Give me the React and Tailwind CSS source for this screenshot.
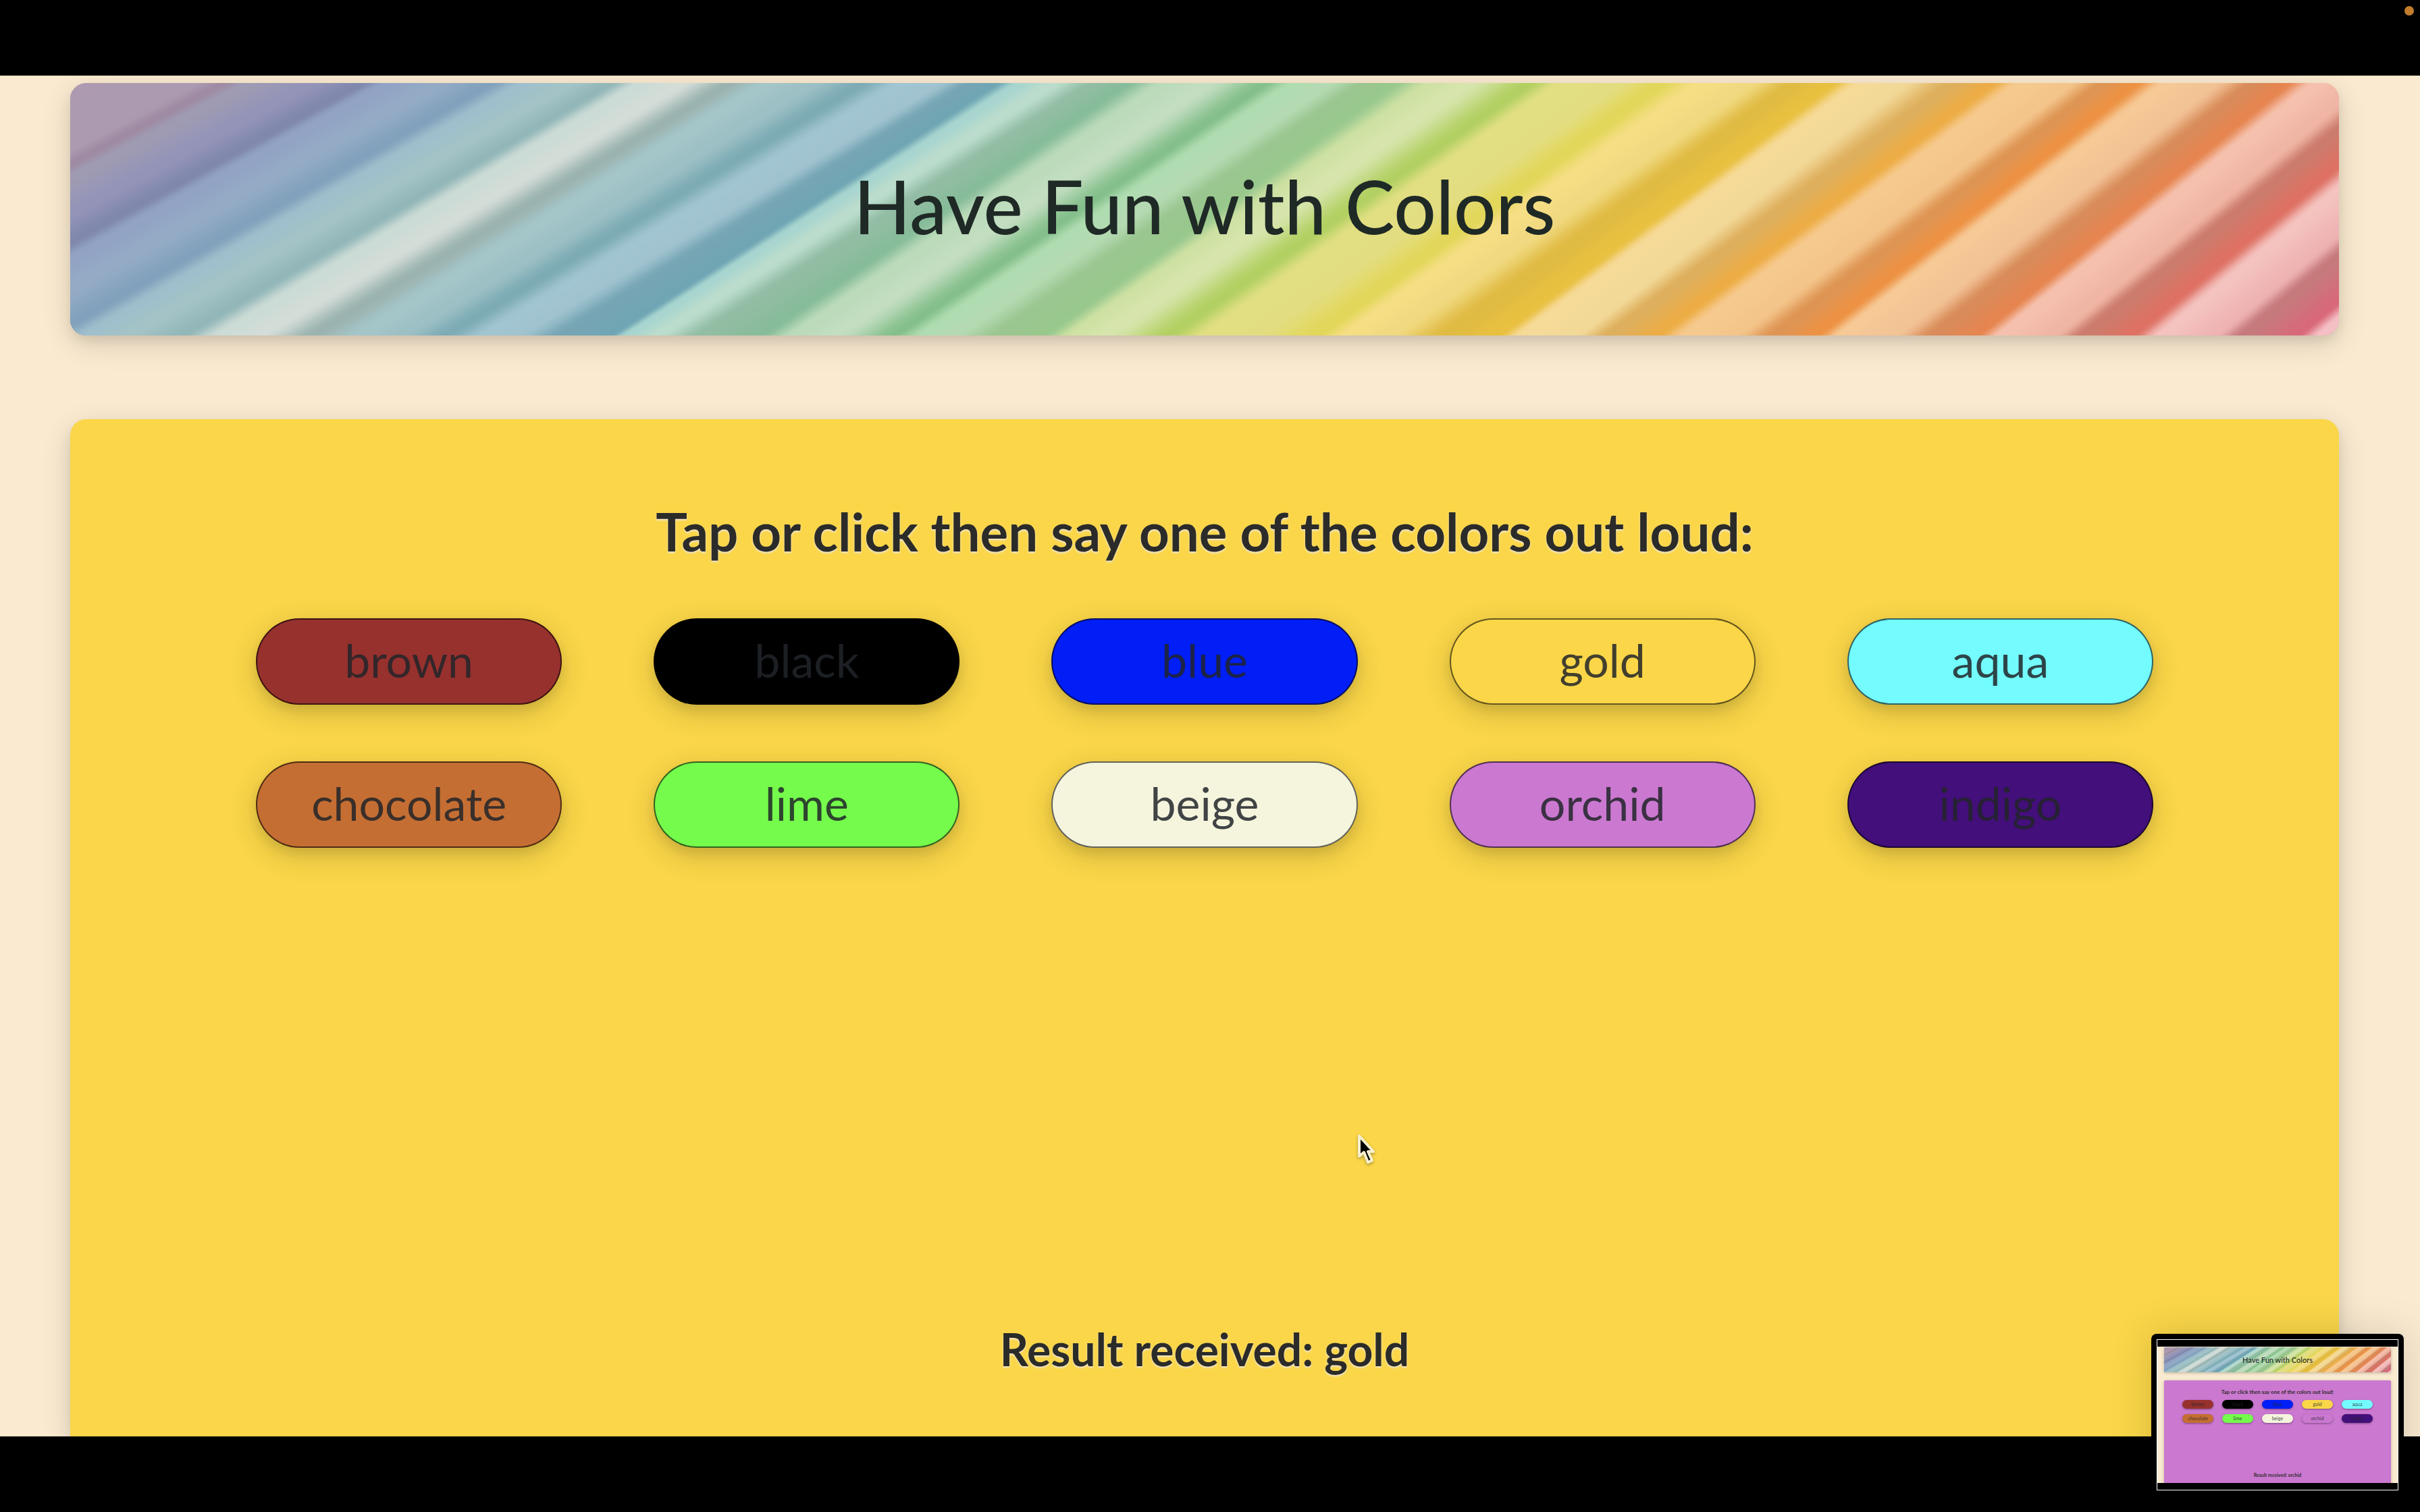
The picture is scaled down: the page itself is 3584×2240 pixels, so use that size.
import React from "react";

// Each fold of paper in the banner: [x at the top edge, x at the bottom edge, colour].
const FOLDS = [
  [100, -600, "#ad9ab0"],
  [290, -420, "#ab9ab0"],
  [329, -375, "#9f8ba3"],
  [365, -335, "#9f9bb3"],
  [459, -230, "#9394b8"],
  [535, -150, "#8088ac"],
  [570, -105, "#92a3c4"],
  [650, -20, "#94abc5"],
  [727, 75, "#82a1bc"],
  [773, 122, "#9fbfcc"],
  [842, 184, "#a3c3c6"],
  [905, 270, "#93b7b9"],
  [945, 318, "#cbdbd5"],
  [1010, 383, "#d4ddd8"],
  [1078, 459, "#9bb3b0"],
  [1132, 528, "#a5c6c9"],
  [1200, 590, "#9dc0c5"],
  [1276, 658, "#7dabb5"],
  [1330, 712, "#a1c5d1"],
  [1391, 765, "#a0c3cf"],
  [1435, 826, "#76a5b4"],
  [1475, 903, "#70a6b4"],
  [1506, 926, "#a8d5cf"],
  [1560, 972, "#bcddcd"],
  [1618, 1033, "#92bda4"],
  [1667, 1125, "#87bc9a"],
  [1720, 1171, "#bbdbba"],
  [1789, 1235, "#c3dec1"],
  [1873, 1322, "#84bf8b"],
  [1912, 1361, "#afdcb1"],
  [1965, 1410, "#b5dab3"],
  [2020, 1475, "#9ac68f"],
  [2062, 1544, "#99c88d"],
  [2118, 1583, "#cfe2a4"],
  [2172, 1636, "#d7e5ad"],
  [2264, 1728, "#b2d062"],
  [2309, 1781, "#e1df82"],
  [2390, 1850, "#e3dd82"],
  [2460, 1950, "#e2d75a"],
  [2514, 1988, "#f5de84"],
  [2590, 2057, "#f0d980"],
  [2652, 2133, "#e0bb43"],
  [2713, 2218, "#e9c040"],
  [2751, 2248, "#f6da98"],
  [2812, 2332, "#f2d998"],
  [2889, 2378, "#deaf5d"],
  [2950, 2453, "#edad46"],
  [2988, 2491, "#f6ca8f"],
  [3065, 2568, "#f4c58b"],
  [3111, 2621, "#de9554"],
  [3164, 2690, "#ed9244"],
  [3203, 2721, "#f6c996"],
  [3279, 2805, "#f2c395"],
  [3333, 2858, "#d98b5a"],
  [3386, 2927, "#e68550"],
  [3425, 2958, "#f5c1ae"],
  [3500, 3042, "#f0b5a4"],
  [3545, 3080, "#cc7c6c"],
  [3610, 3157, "#de7164"],
  [3650, 3195, "#f4c3bf"],
  [3730, 3279, "#efb3b4"],
  [3770, 3317, "#c67a7c"],
  [3850, 3402, "#d8697a"],
  [3880, 3432, "#f5c0c5"],
  [3960, 3520, "#f2bcc0"],
];

const STEPS = 12;

function channels(hex) {
  return [1, 3, 5].map((i) => parseInt(hex.slice(i, i + 2), 16));
}

function buildSlices() {
  const slices = [];
  for (let i = 0; i < FOLDS.length - 1; i++) {
    const [t0, b0, c0] = FOLDS[i];
    const [t1, b1, c1] = FOLDS[i + 1];
    const from = channels(c0);
    const to = channels(c1);
    for (let s = 0; s < STEPS; s++) {
      const k = s / STEPS;
      const ease = k * k * (3 - 2 * k);
      const rgb = from.map((v, n) => Math.round(v + (to[n] - v) * ease));
      const top = Math.round(t0 + (t1 - t0) * k) - 104;
      const bottom = Math.round(b0 + (b1 - b0) * k) - 104;
      slices.push({
        points: `${top},0 ${top + 60},0 ${bottom + 60},374 ${bottom},374`,
        fill: `rgb(${rgb.join(",")})`,
      });
    }
  }
  return slices;
}

const SLICES = buildSlices();

function Folds() {
  return (
    <svg
      className="absolute inset-0 h-full w-full"
      viewBox="0 0 3360 374"
      preserveAspectRatio="none"
      aria-hidden="true"
    >
      {SLICES.map((s, i) => (
        <polygon key={i} points={s.points} fill={s.fill} />
      ))}
    </svg>
  );
}

const COLORS = [
  { name: "brown", bg: "bg-[#97312e]" },
  { name: "black", bg: "bg-black" },
  { name: "blue", bg: "bg-[#001ef5]" },
  { name: "gold", bg: "bg-[#fad648]" },
  { name: "aqua", bg: "bg-[#73fbfd]" },
  { name: "chocolate", bg: "bg-[#c56e33]" },
  { name: "lime", bg: "bg-[#75fb4c]" },
  { name: "beige", bg: "bg-[#f5f5de]" },
  { name: "orchid", bg: "bg-[#cb78d1]" },
  { name: "indigo", bg: "bg-[#430f7a]" },
];

function Preview() {
  return (
    <div className="absolute right-6 bottom-6 w-[374px] rounded-lg bg-black p-2 shadow-[0_0_60px_rgba(0,0,0,0.15)]">
      <div className="flex h-56 flex-col border border-white bg-black pt-[10px] pb-[10px]">
        <div className="flex flex-1 flex-col gap-3 overflow-hidden bg-[#faead0] px-[10px] pt-px">
          <div className="relative flex h-[37px] shrink-0 items-center justify-center overflow-hidden rounded-[2px] shadow-[0_1px_4px_rgba(0,0,0,0.25)]">
            <Folds />
            <span className="relative text-[11px] leading-none font-medium text-[#1f2926]">
              Have Fun with Colors
            </span>
          </div>
          <div className="flex flex-1 flex-col items-center rounded-t-[2px] bg-[#cb78d1] px-[27px] pt-3 shadow-[0_1px_4px_rgba(0,0,0,0.25)]">
            <span className="text-[8px] leading-[10px] font-bold text-[#2b2b29]">
              Tap or click then say one of the colors out loud:
            </span>
            <div className="mt-[7px] grid w-full grid-cols-5 gap-x-[13px] gap-y-2">
              {COLORS.map((c) => (
                <span
                  key={c.name}
                  className={`${c.bg} flex h-[13px] items-center justify-center rounded-full text-[7px] leading-none text-[#212529]/85 shadow-[0_1px_3px_rgba(0,0,0,0.4)]`}
                >
                  {c.name}
                </span>
              ))}
            </div>
            <span className="mt-auto mb-2 text-[7px] leading-[8px] font-bold text-[#2b2b29]">
              Result received: orchid
            </span>
          </div>
        </div>
      </div>
    </div>
  );
}

function Cursor() {
  return (
    <svg
      className="absolute top-[1676px] left-[2008px] h-[54px] w-[36px] drop-shadow-[0_2px_2px_rgba(0,0,0,0.3)]"
      viewBox="0 0 36 54"
      aria-hidden="true"
    >
      <path
        d="M5 7 V37 L12 31 L18 46 L24 43 L18 30 H26 Z"
        fill="#000"
        stroke="#f6efcf"
        strokeWidth="4"
        strokeLinejoin="round"
      />
    </svg>
  );
}

export default function App() {
  return (
    <div className="relative flex h-screen flex-col overflow-hidden bg-black font-['Lato',sans-serif]">
      <div className="flex h-28 shrink-0 items-start justify-end p-[9px]">
        <span className="size-[14px] rounded-full bg-[#c27c2c]" />
      </div>

      <div className="flex min-h-0 flex-1 flex-col gap-[124px] overflow-hidden bg-[#faead0] pt-[11px] pr-[120px] pl-[104px]">
        <header className="relative flex h-[374px] shrink-0 items-center justify-center overflow-hidden rounded-3xl pb-3 shadow-[0_8px_16px_rgba(0,0,0,0.08),0_12px_44px_rgba(0,0,0,0.14)]">
          <Folds />
          <h1 className="relative text-[110px] leading-none font-medium text-[#1f2926]">
            Have Fun with Colors
          </h1>
        </header>

        <main className="flex flex-1 flex-col items-center rounded-t-3xl bg-[#fad648] px-[275px] pt-[120px] shadow-[0_8px_16px_rgba(0,0,0,0.08),0_12px_44px_rgba(0,0,0,0.14)]">
          <h2 className="text-[78px] leading-[92px] font-bold text-[#2b2b29] [text-shadow:0_2px_3px_#efe6d8]">
            Tap or click then say one of the colors out loud:
          </h2>

          <div className="mt-[83px] grid w-full grid-cols-5 gap-x-[136px] gap-y-[84px]">
            {COLORS.map((c) => (
              <button
                key={c.name}
                type="button"
                className={`${c.bg} flex h-32 items-center justify-center rounded-full border-2 border-black/60 pb-1 text-[68px] leading-none text-[#212529]/85 shadow-[0_8px_16px_rgba(0,0,0,0.08),0_12px_44px_rgba(0,0,0,0.16)]`}
              >
                {c.name}
              </button>
            ))}
          </div>

          <p className="mt-auto mb-[91px] text-[66px] leading-[76px] font-bold text-[#2b2b29] [text-shadow:0_2px_3px_#efe6d8]">
            Result received: gold
          </p>
        </main>
      </div>

      <footer className="h-28 shrink-0 bg-black" />

      <Cursor />
      <Preview />
    </div>
  );
}
